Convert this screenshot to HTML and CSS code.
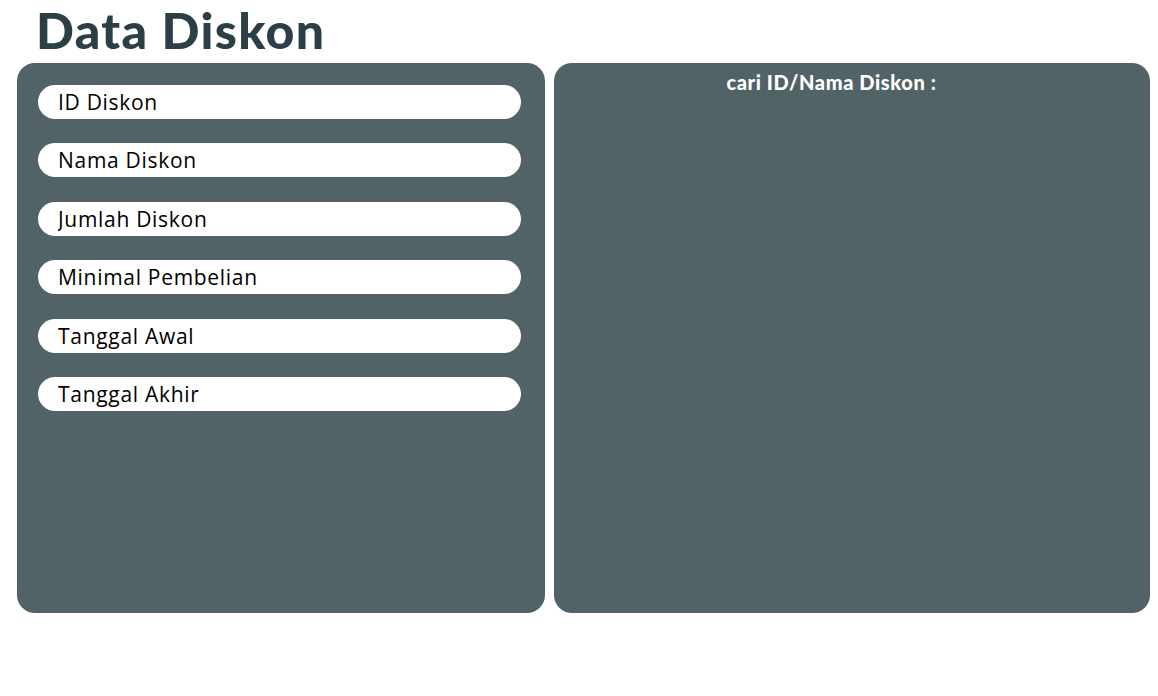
FILE: index.html
```html
<!DOCTYPE html>
<html lang="id">
<head>
<meta charset="utf-8">
<title>Data Diskon</title>
<link rel="stylesheet" href="styles.css">
</head>
<body>
<h1 class="title">Data Diskon</h1>
<div class="panels">
  <form class="panel form-panel">
    <input class="field" type="text" placeholder="ID Diskon">
    <input class="field" type="text" placeholder="Nama Diskon">
    <input class="field" type="text" placeholder="Jumlah Diskon">
    <input class="field" type="text" placeholder="Minimal Pembelian">
    <input class="field" type="text" placeholder="Tanggal Awal">
    <input class="field" type="text" placeholder="Tanggal Akhir">
  </form>
  <div class="panel search-panel">
    <div class="search-label">cari ID/Nama Diskon :</div>
  </div>
</div>
</body>
</html>
```
FILE: styles.css
```css
html, body {
  margin: 0;
  padding: 0;
  background: #ffffff;
}
body {
  width: 1158px;
  height: 696px;
  overflow: hidden;
}
.title {
  margin: 0;
  padding: 4px 0 0 36px;
  height: 59px;
  box-sizing: border-box;
  font-family: "Lato", "Noto Sans", sans-serif;
  font-weight: 900;
  font-size: 50px;
  line-height: 52px;
  color: #2a3f46;
  letter-spacing: 1.3px;
}
.panels {
  display: grid;
  grid-template-columns: 528px 596px;
  gap: 9px;
  padding-left: 17px;
  margin-top: 4px;
}
.panel {
  background: #526367;
  border-radius: 18px;
  height: 550px;
  box-sizing: border-box;
}
.form-panel {
  margin: 0;
  display: flex;
  flex-direction: column;
  gap: 24.4px;
  padding: 22px 24px 0 21px;
}
.field {
  height: 34px;
  box-sizing: border-box;
  border: none;
  border-radius: 17px;
  background: #ffffff;
  padding: 0 20px;
  font-family: "Open Sans", "Liberation Sans", sans-serif;
  font-size: 21px;
  letter-spacing: 0.7px;
  color: #000;
  outline: none;
}
.field::placeholder {
  color: #000000;
  opacity: 1;
}
.search-panel {
  padding-top: 7px;
}
.search-label {
  width: 555px;
  text-align: center;
  font-family: "Lato", "Noto Sans", sans-serif;
  font-weight: 900;
  font-size: 20px;
  line-height: 24px;
  letter-spacing: 0.6px;
  color: #ffffff;
}
```
